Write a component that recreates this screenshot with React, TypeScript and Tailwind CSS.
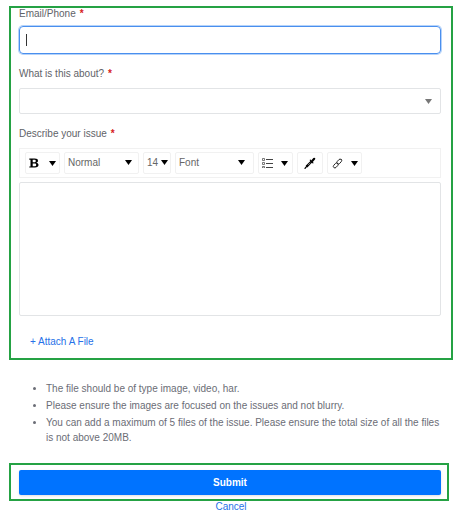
import type { ReactNode } from "react";

const Caret = ({ className = "" }: { className?: string }) => (
  <svg viewBox="0 0 7 5" className={`pointer-events-none h-[5px] w-[7px] shrink-0 ${className}`} aria-hidden="true">
    <path d="M0 0h7L3.5 5z" fill="currentColor" />
  </svg>
);

const Required = () => <span className="ml-1 font-bold text-[#d62020]">*</span>;

const toolClass =
  "flex h-[22px] items-center justify-between rounded-xs border border-[#f1f1f1] bg-white text-black";

type ToolSelectProps = { label: string; value: string; className: string; caretClass: string };

const ToolSelect = ({ label, value, className, caretClass }: ToolSelectProps) => (
  <div className={`relative ${className}`}>
    <select
      aria-label={label}
      className="h-[22px] w-full appearance-none rounded-xs border border-[#f1f1f1] bg-white pl-[3px] text-[10px] text-[#666]"
    >
      <option>{value}</option>
    </select>
    <Caret className={`absolute top-2 text-black ${caretClass}`} />
  </div>
);

const ToolButton = ({ label, className, children }: { label: string; className: string; children: ReactNode }) => (
  <button type="button" aria-label={label} className={`${toolClass} ${className}`}>
    {children}
  </button>
);

const Toolbar = () => (
  <div className="flex h-[30px] items-center gap-1 border border-[#f1f1f1] pl-[5px]">
    <ToolButton label="Bold" className="w-[35px] px-[3px]">
      <svg viewBox="0 0 10 10" className="h-[10px] w-[10px]" aria-hidden="true">
        <path
          d="M.3.6h5.4C7.9.6 9 1.4 9 2.8c0 1-.6 1.700-1.800 2C8.700 5 9.500 5.800 9.500 7c0 1.600-1.200 2.500-3.600 2.500H.3V8.400h1.200V1.700H.3zM3.700 1.800v2.500h1.500c1.100 0 1.600-.4 1.600-1.300 0-.8-.5-1.200-1.600-1.200zm0 3.600v2.900h1.700c1.200 0 1.800-.5 1.800-1.500s-.6-1.400-1.800-1.400z"
          fill="currentColor"
        />
      </svg>
      <Caret />
    </ToolButton>
    <ToolSelect label="Text style" value="Normal" className="w-[75px]" caretClass="right-[7px]" />
    <ToolSelect label="Font size" value="14" className="w-7" caretClass="right-[3px]" />
    <ToolSelect label="Font family" value="Font" className="w-[79px]" caretClass="right-[9px]" />
    <ToolButton label="List" className="w-[35px] pr-1 pl-[3px]">
      <svg viewBox="0 0 11 10" className="h-[10px] w-[11px]" fill="none" stroke="#444" aria-hidden="true">
        <path d="M4 1.5h7M4 5.500h7M4 9.500h7" strokeWidth="1" />
        <path d="M.5.500h2v2h-2zM.5 4.500h2v2h-2zM.5 8.500h2v1.500h-2z" strokeWidth="0.7" />
      </svg>
      <Caret />
    </ToolButton>
    <ToolButton label="Text color" className="w-[26px] px-[6px]">
      <svg viewBox="0 0 12 12" className="h-3 w-3" fill="none" stroke="currentColor" aria-hidden="true">
        <path d="M7.500 4.500 2.500 9.600" strokeWidth="2.300" />
        <path d="M3.100 8.800 1 11.300" strokeWidth="1.300" strokeLinecap="round" />
        <path d="m4 8.100 2.400-2.400" stroke="white" strokeWidth="0.5" />
        <path d="m6.300 3.200 2.600 2.600" strokeWidth="1.200" strokeLinecap="round" />
        <path d="M8.200 3.900 10.200 1.800" strokeWidth="2.200" strokeLinecap="round" />
      </svg>
    </ToolButton>
    <ToolButton label="Link" className="w-[35px] pr-[3px] pl-1">
      <svg
        viewBox="0 0 12 12"
        className="h-[11px] w-[11px]"
        fill="none"
        stroke="#222"
        strokeWidth="1"
        strokeLinecap="round"
        aria-hidden="true"
      >
        <rect x="-1.700" y="-3.100" width="3.400" height="6.200" rx="1.700" transform="translate(7.900 3.900) rotate(42)" />
        <rect x="-1.700" y="-3.100" width="3.400" height="6.200" rx="1.700" transform="translate(4.100 8.100) rotate(42)" />
      </svg>
      <Caret />
    </ToolButton>
  </div>
);

const App = () => {
  return (
    <form className="bg-white pt-[6px] pr-[7px] pl-[9px] font-['Liberation_Sans',Arial,sans-serif] text-[10px] leading-3 text-[#5f6368]">
      <section className="border-2 border-[#25a244] pr-[10px] pb-2.5 pl-2">
        <label htmlFor="contact" className="mb-1.5 block">
          Email/Phone
          <Required />
        </label>
        <div className="relative">
          <input
            id="contact"
            type="text"
            className="block h-7 w-full rounded-sm border border-[#4a8fee] px-2 caret-transparent ring-1 ring-[#b5d3fa] outline-none"
          />
          {/* Text cursor */}
          <span className="absolute top-2 left-[7px] h-3 w-px bg-[#333]" />
        </div>

        <label htmlFor="topic" className="mt-3.5 mb-2 block">
          What is this about?
          <Required />
        </label>
        <div className="relative">
          <select
            id="topic"
            className="block h-[26px] w-full appearance-none rounded-xs border border-[#e2e4e6] bg-white px-2"
          >
            <option></option>
          </select>
          <Caret className="absolute top-[11px] right-[9px] text-[#777]" />
        </div>

        <label htmlFor="issue" className="mt-3.5 mb-2 block">
          Describe your issue
          <Required />
        </label>
        <Toolbar />
        <textarea
          id="issue"
          className="mt-1 block h-[134px] w-full resize-none rounded-xs border border-[#e2e4e6] p-2 outline-none"
        />

        <button type="button" className="mt-5 ml-[11px] block text-[#2671e8]">
          + Attach A File
        </button>
      </section>

      <ul className="mt-[21px] ml-[37px] list-disc space-y-0.5 pr-2 leading-[15px] text-[#6b6d76]">
        <li>The file should be of type image, video, har.</li>
        <li>Please ensure the images are focused on the issues and not blurry.</li>
        <li>
          You can add a maximum of 5 files of the issue. Please ensure the total size of all the files is not above
          20MB.
        </li>
      </ul>

      <div className="mt-[18px] mr-1 border-2 border-[#25a244] pt-[5px] pr-[6px] pb-1 pl-2">
        <button
          type="submit"
          className="block h-[25px] w-full rounded-xs bg-[#0073ff] font-semibold text-white shadow-sm"
        >
          Submit
        </button>
      </div>
      <button type="button" className="mx-auto block text-[#2671e8]">
        Cancel
      </button>
    </form>
  );
};

export default App;
